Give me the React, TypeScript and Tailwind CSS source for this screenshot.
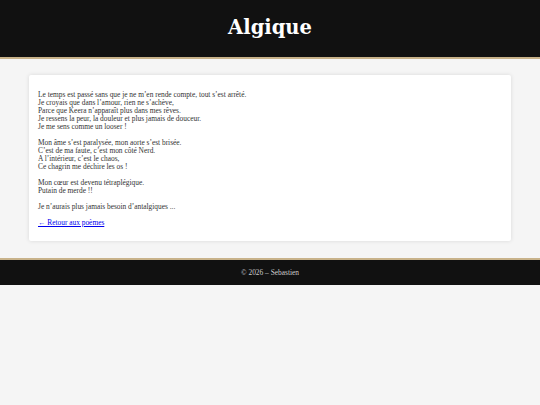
import React from 'react';

const stanzas: string[][] = [
    [
        'Le temps est passé sans que je ne m’en rende compte, tout s’est arrêté.',
        'Je croyais que dans l’amour, rien ne s’achève,',
        'Parce que Keera n’apparaît plus dans mes rêves.',
        'Je ressens la peur, la douleur et plus jamais de douceur.',
        'Je me sens comme un looser !',
    ],
    [
        'Mon âme s’est paralysée, mon aorte s’est brisée.',
        'C’est de ma faute, c’est mon côté Nerd.',
        'A l’intérieur, c’est le chaos,',
        'Ce chagrin me déchire les os !',
    ],
    ['Mon cœur est devenu tétraplégique.', 'Putain de merde !!'],
    ['Je n’aurais plus jamais besoin d’antalgiques ...'],
];

function App() {
    return (
        <div className="min-h-[405px] bg-[#f5f5f5] font-['Liberation_Serif',serif] text-[#333]">
            <header className="h-[59px] bg-[#111] border-b-2 border-[#c8b28a] flex items-center justify-center">
                <h1 className="font-['DejaVu_Serif',serif] text-[19.5px] font-bold text-white mt-[-1px]">
                    Algique
                </h1>
            </header>

            <main className="px-[29px] pt-[16px] pb-[17px]">
                <div className="bg-white rounded-[2px] shadow-[0_0_4px_rgba(0,0,0,0.12)] px-[9px] pt-[16px] pb-[14px] text-[7.4px] leading-[8px]">
                    {stanzas.map((lines, i) => (
                        <p key={i} className="mb-[8px]">
                            {lines.map((l, j) => (
                                <React.Fragment key={j}>
                                    {l}
                                    {j < lines.length - 1 ? <br /> : null}
                                </React.Fragment>
                            ))}
                        </p>
                    ))}
                    <p>
                        <a href="#" className="text-[#0000ee] underline decoration-[#0000ee]">
                            ← Retour aux poèmes
                        </a>
                    </p>
                </div>
            </main>

            <footer className="h-[27px] bg-[#111] border-t-2 border-[#c8b28a] flex items-center justify-center">
                <p className="text-[7.4px] text-[#ccc]">© 2026 – Sebastien</p>
            </footer>
        </div>
    );
}

export default App;
